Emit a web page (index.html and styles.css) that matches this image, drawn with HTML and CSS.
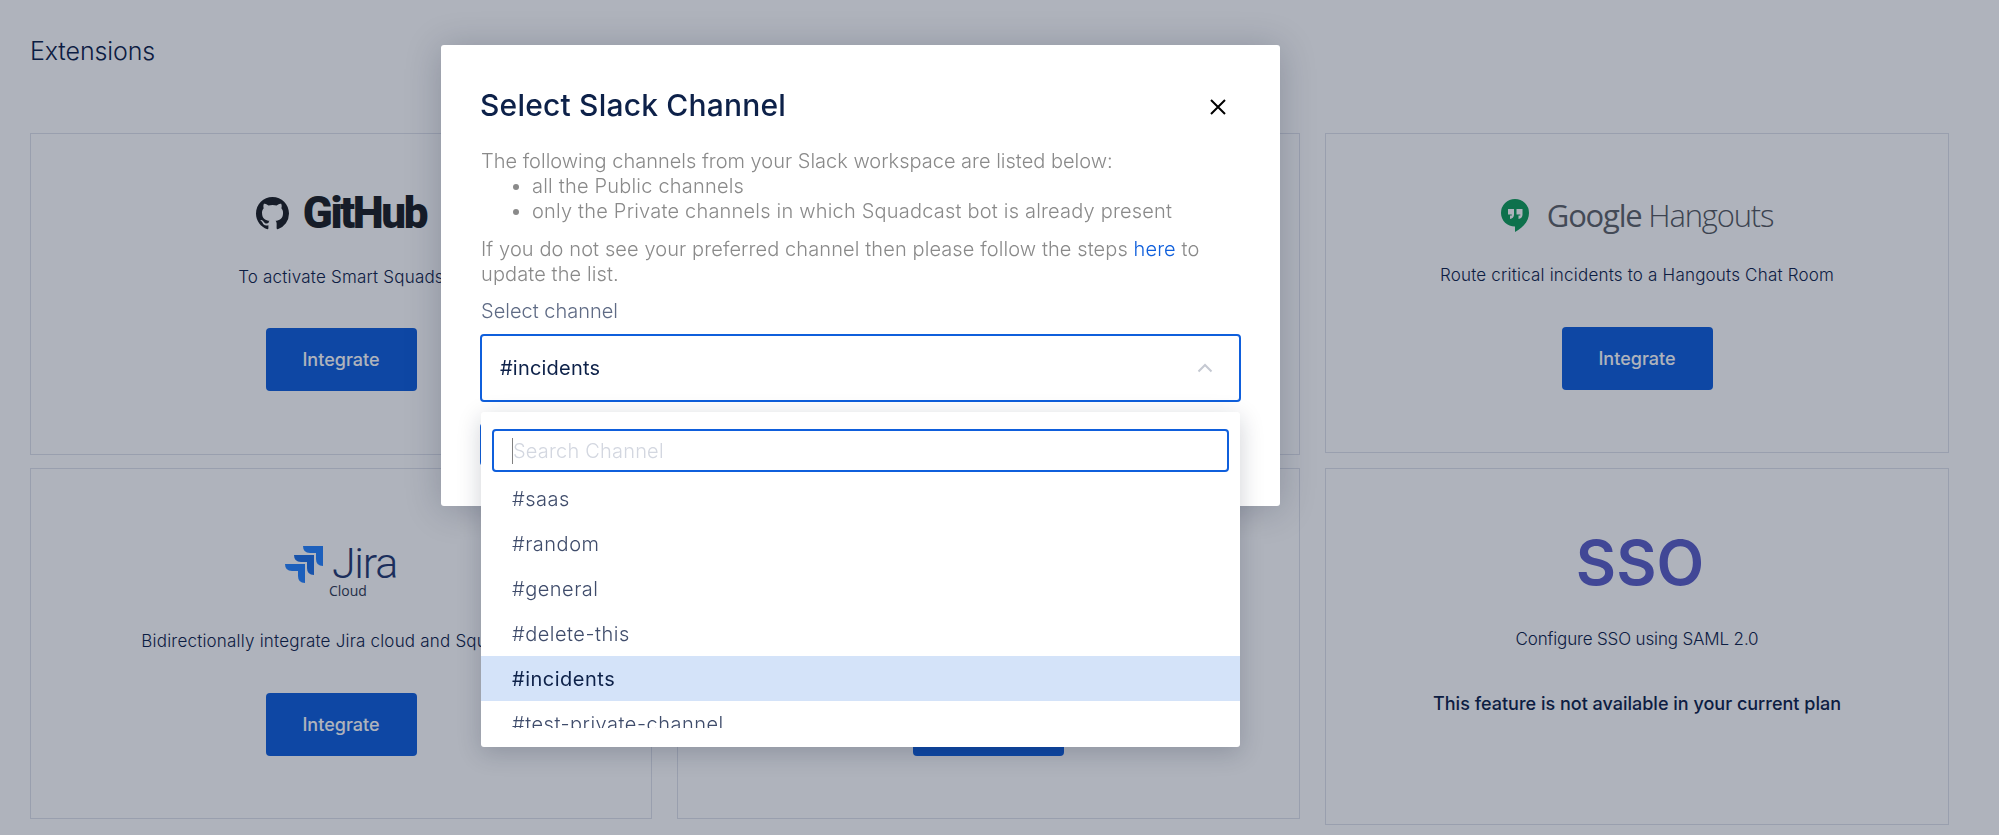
FILE: index.html
```html
<!DOCTYPE html>
<html lang="en">
<head>
  <meta charset="UTF-8" />
  <meta name="viewport" content="width=device-width, initial-scale=1" />
  <title>Extensions</title>
  <link rel="stylesheet" href="styles.css">
</head>
<body>
  <div class="page">
    <h1 class="page-title">Extensions</h1>

    <div class="card-grid">
      <div class="card card-github">
        <div class="logo">
          <svg class="github-mark" viewBox="0 0 16 16"><path d="M8 0C3.58 0 0 3.58 0 8c0 3.54 2.29 6.53 5.47 7.59.4.07.55-.17.55-.38 0-.19-.01-.82-.01-1.49-2.01.37-2.53-.49-2.69-.94-.09-.23-.48-.94-.82-1.13-.28-.15-.68-.52-.01-.53.63-.01 1.08.58 1.23.82.72 1.21 1.87.87 2.33.66.07-.52.28-.87.51-1.07-1.78-.2-3.64-.89-3.64-3.95 0-.87.31-1.59.82-2.15-.08-.2-.36-1.02.08-2.12 0 0 .67-.21 2.2.82.64-.18 1.32-.27 2-.27.68 0 1.36.09 2 .27 1.53-1.04 2.2-.82 2.2-.82.44 1.1.16 1.92.08 2.12.51.56.82 1.27.82 2.15 0 3.07-1.87 3.75-3.65 3.95.29.25.54.73.54 1.48 0 1.07-.01 1.93-.01 2.2 0 .21.15.46.55.38A8.013 8.013 0 0016 8c0-4.42-3.58-8-8-8z"/></svg>
          <span class="github-word">GitHub</span>
        </div>
        <p class="card-text">To activate Smart Squads</p>
        <button class="btn">Integrate</button>
      </div>

      <div class="card"></div>

      <div class="card card-hangouts">
        <div class="logo">
          <svg class="hangouts-mark" viewBox="0 0 28 33">
            <path d="M14 0a14 14 0 0 0-14 14c0 7.7 6.3 13.6 14 13.6V33c7.8-4 14-11 14-19A14 14 0 0 0 14 0z" fill="#0f9d58"/>
            <path d="M7 10h6v6a4.5 4.5 0 0 1-4 4v-3.400h1.800V15.500H7zM15.500 10h6v6a4.500 4.500 0 0 1-4 4v-3.400h1.800V15.500h-3.800z" fill="#fff"/>
          </svg>
          <span class="hangouts-word">Google <span class="hangouts-word-light">Hangouts</span></span>
        </div>
        <p class="card-text">Route critical incidents to a Hangouts Chat Room</p>
        <button class="btn">Integrate</button>
      </div>

      <div class="card card-jira">
        <div class="logo">
          <svg class="jira-mark" viewBox="0 0 38 38">
            <path d="M18 1h20v20q-7 0-7-7V8h-6q-7 0-7-7z" fill="#2684ff"/>
            <path d="M9 10h20v20q-7 0-7-7v-6h-6q-7 0-7-7z" fill="#1f70e6"/>
            <path d="M0 19h20v19q-7 0-7-7v-5H7q-7 0-7-7z" fill="#2684ff"/>
          </svg>
          <div class="jira-word">
            <span class="jira-name">Jira</span>
            <span class="jira-sub">Cloud</span>
          </div>
        </div>
        <p class="card-text">Bidirectionally integrate Jira cloud and Squadcast</p>
        <button class="btn">Integrate</button>
      </div>

      <div class="card card-middle">
        <button class="btn">Integrate</button>
      </div>

      <div class="card card-sso">
        <div class="logo"><span class="sso-word">SSO</span></div>
        <p class="card-text">Configure SSO using SAML 2.0</p>
        <p class="card-note">This feature is not available in your current plan</p>
      </div>
    </div>
  </div>

  <div class="overlay"></div>

  <div class="modal">
    <div class="modal-head">
      <h2 class="modal-title">Select Slack Channel</h2>
      <svg class="modal-close" viewBox="0 0 16 16"><path d="M1 1l14 14M15 1L1 15"/></svg>
    </div>

    <p class="modal-text">The following channels from your Slack workspace are listed below:</p>
    <ul class="modal-list">
      <li>all the Public channels</li>
      <li>only the Private channels in which Squadcast bot is already present</li>
    </ul>
    <p class="modal-text modal-text-gap">If you do not see your preferred channel then please follow the steps <a class="link" href="#">here</a> to update the list.</p>

    <div class="field-label">Select channel</div>
    <div class="select">
      <div class="select-box">
        <span>#incidents</span>
        <svg class="chevron" viewBox="0 0 16 10"><path d="M1.500 8.500L8 2l6.500 6.500"/></svg>
      </div>

      <div class="dropdown">
        <div class="search">
          <span class="search-caret"></span>
          <span class="search-hint">Search Channel</span>
        </div>
        <div class="option-list">
          <div class="option">#saas</div>
          <div class="option">#random</div>
          <div class="option">#general</div>
          <div class="option">#delete-this</div>
          <div class="option option-active">#incidents</div>
          <div class="option">#test-private-channel</div>
        </div>
      </div>
    </div>

    <button class="btn modal-save">Save</button>
  </div>
</body>
</html>
```

FILE: styles.css
```css
* {
  box-sizing: border-box;
}

body {
  font-family: Inter, Roboto, 'Liberation Sans', sans-serif;
  margin: 0;
  height: 835px;
  overflow: hidden;
  background: #fff;
  color: #0d2149;
}

.page {
  padding: 34px 50px 0 30px;
}

.page-title {
  margin: 0;
  font-size: 25px;
  line-height: 34px;
  font-weight: 300;
  letter-spacing: -0.1px;
}

.card-grid {
  display: grid;
  grid-template-columns: 622px 623px 624px;
  column-gap: 25px;
  row-gap: 13px;
  margin-top: 65px;
  align-items: start;
}

.card {
  height: 322px;
  border: 1px solid #dfe2ea;
  display: flex;
  flex-direction: column;
  align-items: center;
  padding-top: 49px;
}

.logo {
  height: 60px;
  display: flex;
  align-items: center;
  justify-content: center;
  flex-shrink: 0;
}

.card-text {
  margin: 22px 0 0;
  font-size: 17px;
  line-height: 24px;
  font-weight: 300;
  letter-spacing: 0.2px;
  white-space: nowrap;
}

.btn {
  margin-top: 39px;
  width: 151px;
  height: 63px;
  border: none;
  border-radius: 4px;
  background: #0f5fdc;
  color: #fff;
  font-family: inherit;
  font-size: 18px;
  font-weight: 500;
  flex-shrink: 0;
}

/* github */
.github-mark {
  width: 33px;
  height: 33px;
  fill: #1b1f23;
}

.github-word {
  margin-left: 14px;
  font-family: Roboto, sans-serif;
  font-size: 44px;
  font-weight: 900;
  letter-spacing: -2.400px;
  color: #1b1f23;
}

/* hangouts */
.card-hangouts {
  height: 320px;
  padding-top: 53px;
}

.card-hangouts .logo {
  height: 56px;
}

.card-hangouts .card-text {
  margin-top: 20px;
}

.card-hangouts .btn {
  margin-top: 40px;
}

.hangouts-mark {
  width: 28px;
  height: 33px;
}

.hangouts-word {
  margin-left: 18px;
  font-family: 'Open Sans', sans-serif;
  font-size: 31px;
  letter-spacing: -1.2px;
  color: #5f6368;
}

.hangouts-word-light {
  font-weight: 300;
  color: #55595e;
}

/* jira */
.card-jira,
.card-middle {
  height: 351px;
}

.card-jira {
  padding-top: 71px;
}

.card-jira .card-text {
  margin-top: 29px;
}

.card-jira .btn {
  margin-top: 40px;
}

.card-middle {
  padding-top: 185px;
}

.jira-mark {
  width: 38px;
  height: 38px;
  margin-top: -12px;
}

.jira-word {
  margin-left: 9px;
  display: flex;
  flex-direction: column;
}

.jira-name {
  font-family: Roboto, sans-serif;
  font-size: 43px;
  line-height: 40px;
  font-weight: 300;
  letter-spacing: -1.2px;
  color: #253a70;
}

.jira-sub {
  font-family: 'Open Sans', sans-serif;
  font-size: 14px;
  line-height: 15px;
  margin-left: -3px;
  color: #2f3a52;
}

/* sso */
.card-sso {
  height: 357px;
  padding-top: 63px;
}

.card-sso .card-text {
  margin-top: 35px;
  letter-spacing: -0.15px;
}

.sso-word {
  margin-left: 6px;
  font-size: 62px;
  font-weight: 600;
  color: #5b5fc7;
}

.card-note {
  margin: 41px 0 0;
  font-size: 18px;
  line-height: 24px;
  font-weight: 500;
}

.overlay {
  position: fixed;
  inset: 0;
  background: rgba(13, 25, 52, 0.33);
}

/* modal */
.modal {
  position: absolute;
  left: 441px;
  top: 45px;
  width: 839px;
  height: 461px;
  padding: 42px 39px 0;
  background: #fff;
  border-radius: 3px;
  box-shadow: 0 3px 36px rgba(13, 25, 52, 0.22);
}

.modal-head {
  display: flex;
  align-items: center;
  justify-content: space-between;
  padding-right: 15px;
}

.modal-title {
  margin: 0;
  font-size: 30px;
  line-height: 36px;
  font-weight: 500;
  letter-spacing: 0.2px;
}

.modal-close {
  width: 16px;
  height: 16px;
  margin-top: 3px;
  fill: none;
  stroke: #000;
  stroke-width: 2;
}

.modal-text {
  margin: 26px 0 0;
  padding-left: 1px;
  font-size: 20px;
  line-height: 25px;
  font-weight: 300;
  color: #8a8a8a;
}

.modal-text-gap {
  margin-top: 13px;
  letter-spacing: 0.1px;
}

.modal-list {
  margin: 0;
  padding-left: 52px;
  font-size: 20px;
  line-height: 25px;
  font-weight: 300;
  letter-spacing: 0.2px;
  color: #8a8a8a;
}

.link {
  color: #0f5fdc;
  text-decoration: none;
}

.field-label {
  margin-top: 12px;
  padding-left: 1px;
  font-size: 20px;
  line-height: 25px;
  font-weight: 300;
  color: #5f6b85;
}

.select {
  position: relative;
  margin-top: 10px;
}

.select-box {
  height: 68px;
  border: 2px solid #0f5fdc;
  border-radius: 4px;
  padding: 0 26px 0 18px;
  display: flex;
  align-items: center;
  justify-content: space-between;
  font-size: 20px;
  letter-spacing: 0.2px;
}

.chevron {
  width: 16px;
  height: 10px;
  fill: none;
  stroke: #c5c9d2;
  stroke-width: 2;
}

.dropdown {
  position: absolute;
  left: 1px;
  right: 1px;
  top: 78px;
  height: 335px;
  padding: 17px 11px 0;
  background: #fff;
  border-radius: 3px;
  box-shadow: 0 6px 24px rgba(13, 25, 52, 0.2);
}

.search {
  height: 43px;
  border: 2px solid #0f5fdc;
  border-radius: 4px;
  padding-left: 18px;
  display: flex;
  align-items: center;
  font-size: 20px;
  font-weight: 300;
  letter-spacing: 0.2px;
  color: #d3d7e0;
}

.search-caret {
  width: 1px;
  height: 26px;
  background: #808080;
}

.option-list {
  height: 252px;
  margin: 4px -11px 0;
  overflow: hidden;
}

.option {
  height: 45px;
  padding-left: 31px;
  display: flex;
  align-items: center;
  font-size: 20px;
  font-weight: 300;
  letter-spacing: 0.5px;
  color: #3f4c6b;
  white-space: nowrap;
}

.option-active {
  background: #d4e3f9;
  color: #0d2149;
  font-weight: 400;
}

.modal-save {
  display: block;
  margin-top: 21px;
  height: 43px;
}
```
